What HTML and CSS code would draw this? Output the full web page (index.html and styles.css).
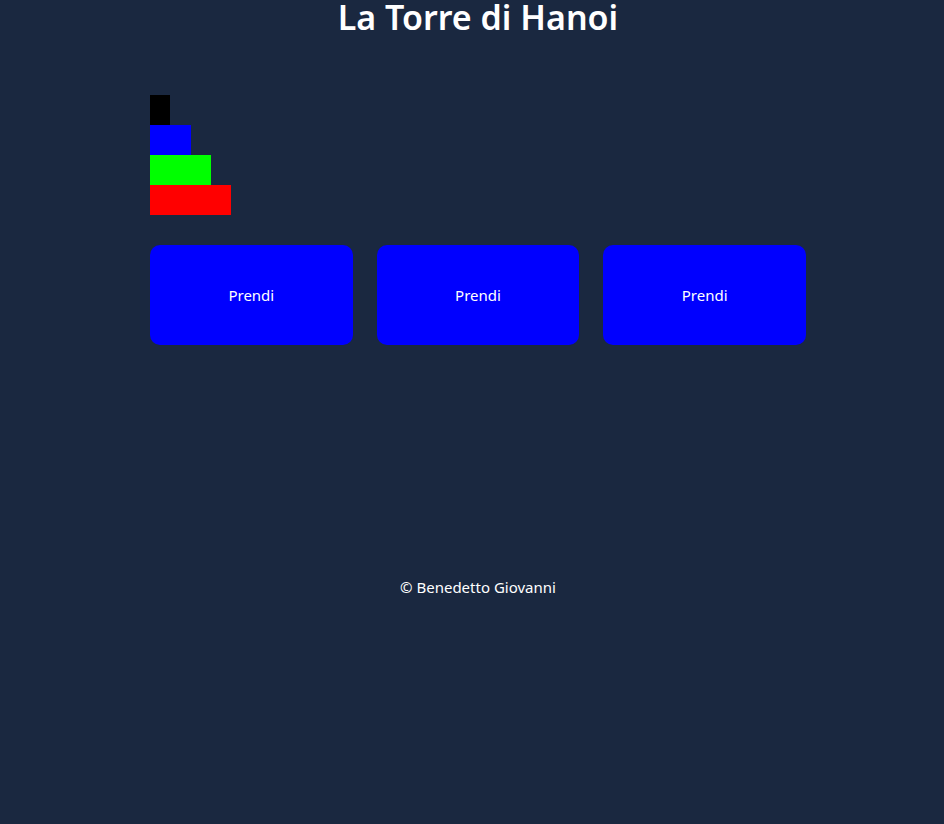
FILE: index.html
```html
<!DOCTYPE html>
<html lang="it">
<head>
<meta charset="utf-8">
<title>La Torre di Hanoi</title>
<link rel="stylesheet" href="styles.css">
</head>
<body>
<main class="app">
  <h1 class="title">La Torre di Hanoi</h1>
  <section class="board">
    <div class="tower">
      <div class="disk disk-1"></div>
      <div class="disk disk-2"></div>
      <div class="disk disk-3"></div>
      <div class="disk disk-4"></div>
    </div>
    <div class="tower"></div>
    <div class="tower"></div>
  </section>
  <section class="controls">
    <button class="take">Prendi</button>
    <button class="take">Prendi</button>
    <button class="take">Prendi</button>
  </section>
  <footer class="footer">© Benedetto Giovanni</footer>
</main>
</body>
</html>
```

FILE: styles.css
```css
html, body {
  margin: 0;
  padding: 0;
  background: #1a2840;
  color: #ffffff;
  font-family: "Noto Sans", "Open Sans", sans-serif;
}

.app {
  width: 656px;
  margin-left: 150px;
  display: flex;
  flex-direction: column;
}

.title {
  margin: 0;
  font-size: 34px;
  line-height: 34px;
  font-weight: 600;
  text-align: center;
}

.board {
  display: grid;
  grid-template-columns: repeat(3, 1fr);
  gap: 24px;
  height: 120px;
  margin-top: 61px;
}

.tower {
  display: flex;
  flex-direction: column;
  justify-content: flex-end;
  align-items: flex-start;
}

.disk {
  height: 30px;
}

.disk-1 { width: 20px; background: #000000; }
.disk-2 { width: 41px; background: #0000ff; }
.disk-3 { width: 61px; background: #00ff00; }
.disk-4 { width: 81px; background: #ff0000; }

.controls {
  display: grid;
  grid-template-columns: repeat(3, 1fr);
  gap: 24px;
  margin-top: 30px;
}

.take {
  height: 100px;
  border: none;
  border-radius: 10px;
  background: #0000ff;
  color: #ffffff;
  font-family: inherit;
  font-size: 15px;
  padding: 0;
}

.footer {
  margin-top: 231px;
  text-align: center;
  font-size: 15px;
  line-height: 22px;
}
```
